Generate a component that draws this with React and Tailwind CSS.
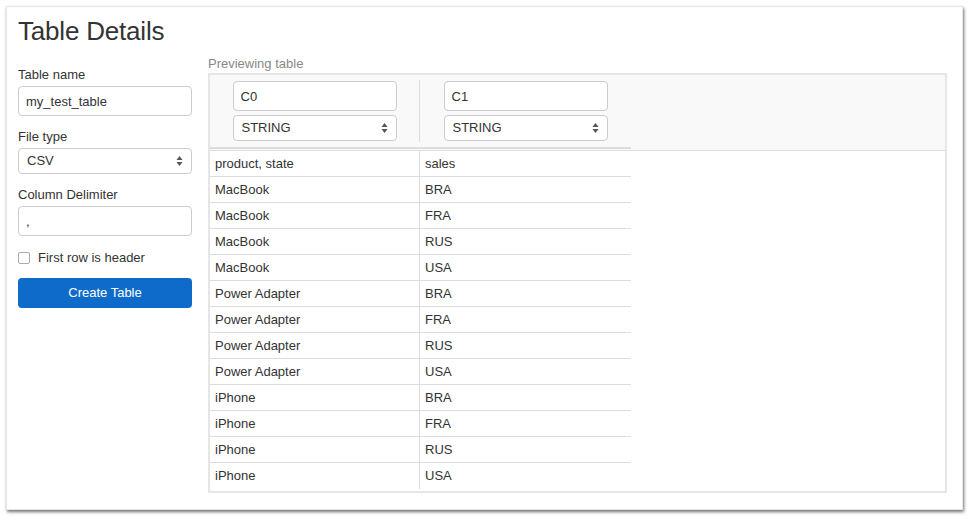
import React from 'react';

const rows = [
  ['product, state', 'sales'],
  ['MacBook', 'BRA'],
  ['MacBook', 'FRA'],
  ['MacBook', 'RUS'],
  ['MacBook', 'USA'],
  ['Power Adapter', 'BRA'],
  ['Power Adapter', 'FRA'],
  ['Power Adapter', 'RUS'],
  ['Power Adapter', 'USA'],
  ['iPhone', 'BRA'],
  ['iPhone', 'FRA'],
  ['iPhone', 'RUS'],
  ['iPhone', 'USA'],
];

const font = { fontFamily: '"Liberation Sans", Arial, sans-serif' };

const Arrows = () => (
  <svg width="7" height="11" viewBox="0 0 7 11" className="pointer-events-none absolute right-[9px] top-1/2 -translate-y-1/2">
    <path d="M3.5 0.5 L6.5 4.5 L0.5 4.5 Z" fill="#555" />
    <path d="M3.5 10.5 L6.5 6.5 L0.5 6.5 Z" fill="#555" />
  </svg>
);

const Select = ({ value, className = '' }) => (
  <div className={`relative ${className}`}>
    <select
      defaultValue={value}
      className="w-full h-[26px] appearance-none rounded-[4px] border border-[#ccc] bg-white pl-[8px] text-[13px] text-[#333] outline-none"
      style={font}
    >
      <option>{value}</option>
    </select>
    <Arrows />
  </div>
);

const TextInput = ({ value, className = '' }) => (
  <input
    defaultValue={value}
    className={`block h-[30px] rounded-[4px] border border-[#ccc] bg-white px-[7px] text-[13px] text-[#333] outline-none ${className}`}
    style={font}
  />
);

const App = () => {
  return (
    <div className="min-h-[520px] bg-white pt-[6px] pl-[6px]" style={font}>
      <div className="w-[957px] h-[504px] bg-white border border-[#e6e6e6] shadow-[1px_2px_3px_rgba(0,0,0,0.55)] pl-[11px] pt-[8px] text-[#333]">
        <h1 className="text-[26px] leading-[32px] font-light tracking-[-0.2px] text-[#333]">Table Details</h1>

        <div className="flex gap-[16px] mt-[9px]">
          {/* left form */}
          <div className="w-[174px] pt-[10px]">
            <label className="block text-[13px] leading-[18px]">Table name</label>
            <TextInput value="my_test_table" className="w-full mt-[2px]" />

            <label className="block text-[13px] leading-[18px] mt-[12px]">File type</label>
            <Select value="CSV" className="mt-[2px]" />

            <label className="block text-[13px] leading-[18px] mt-[12px]">Column Delimiter</label>
            <TextInput value="," className="w-full mt-[2px]" />

            <div className="flex items-center mt-[16px] h-[12px]">
              <span className="w-[12px] h-[12px] rounded-[2px] border border-[#aaa] bg-white"></span>
              <span className="ml-[8px] text-[13px] leading-[18px]">First row is header</span>
            </div>

            <button className="mt-[14px] w-full h-[30px] rounded-[4px] bg-[#0f6bc9] text-white text-[13px] font-medium">
              Create Table
            </button>
          </div>

          {/* preview */}
          <div className="w-[739px] -mt-[1px]">
            <div className="text-[13px] leading-[18px] text-[#888]">Previewing table</div>
            <div className="h-[420px] border-2 border-[#e6e6e6]">
              <div className="h-[76px] bg-[#f9f9f9] border-b border-[#ddd]">
                <div className="flex w-[421px] h-[74px] border-b-2 border-[#ddd] box-border">
                  <div className="w-[210px] border-r border-[#ddd] my-[5px] flex flex-col items-center pt-[1px]">
                    <TextInput value="C0" className="w-[164px]" />
                    <Select value="STRING" className="w-[164px] mt-[4px]" />
                  </div>
                  <div className="w-[211px] my-[5px] flex flex-col items-center pt-[1px]">
                    <TextInput value="C1" className="w-[164px]" />
                    <Select value="STRING" className="w-[164px] mt-[4px]" />
                  </div>
                </div>
              </div>
              <div className="w-[421px]">
                {rows.map((r, i) => (
                  <div
                    key={i}
                    className={`flex h-[26px] text-[13px] ${i < rows.length - 1 ? 'border-b border-[#ddd]' : ''}`}
                  >
                    <div className="w-[210px] border-r border-[#ddd] px-[5px] flex items-center">{r[0]}</div>
                    <div className="w-[211px] px-[5px] flex items-center">{r[1]}</div>
                  </div>
                ))}
              </div>
            </div>
          </div>
        </div>
      </div>
    </div>
  );
};

export default App;
